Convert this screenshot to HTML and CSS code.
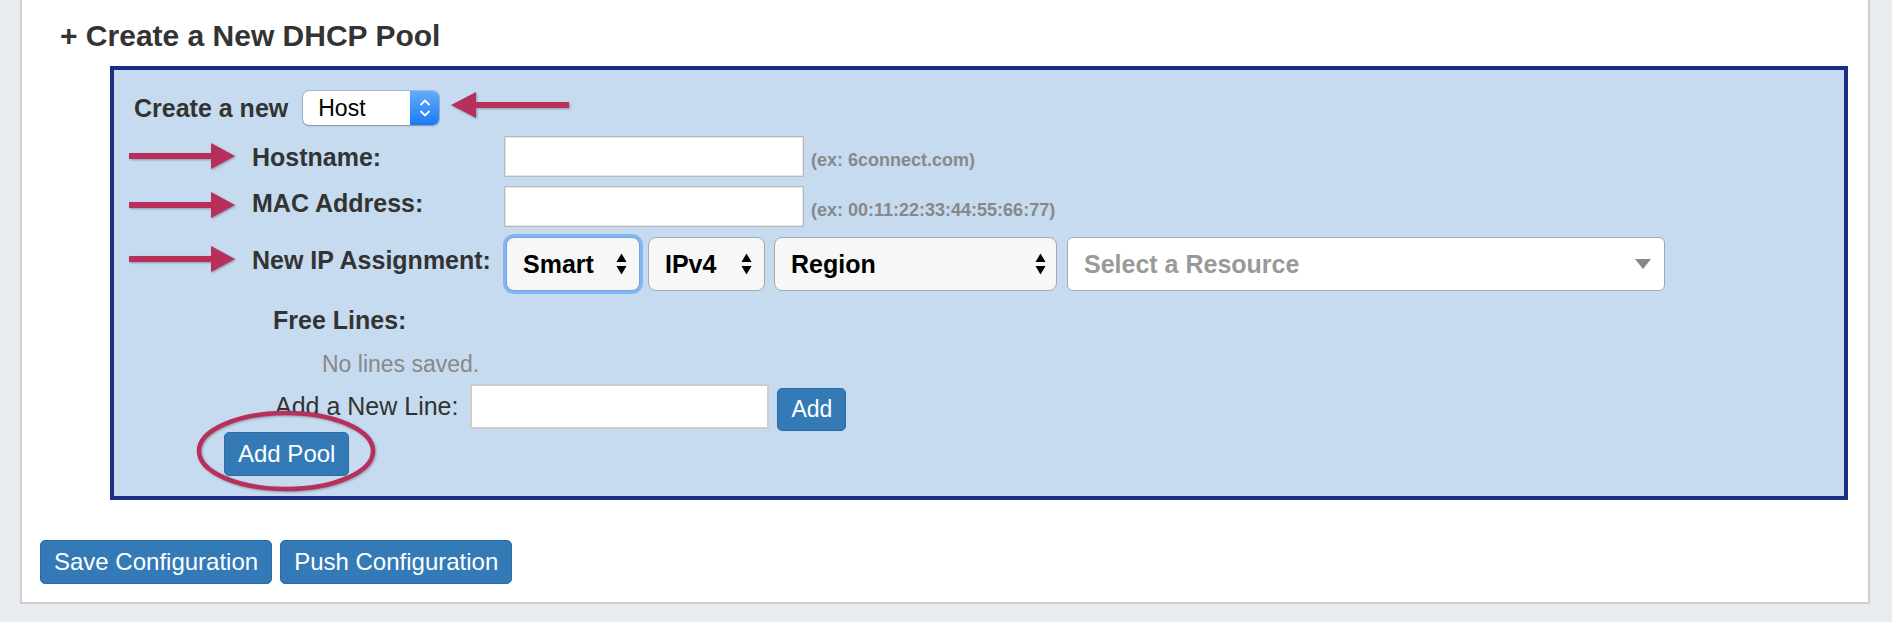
FILE: index.html
```html
<!DOCTYPE html>
<html lang="en">
<head>
<meta charset="utf-8">
<title>Create a New DHCP Pool</title>
<link rel="stylesheet" href="styles.css">
</head>
<body>
<div class="page">
  <div class="panel">
    <h3 class="title">+ Create a New DHCP Pool</h3>
    <div class="pool-box">
      <div class="create-row">
        <span class="create-label">Create a new</span>
        <div class="mac-select">
          <span class="mac-value">Host</span>
          <span class="mac-stepper">
            <svg width="12" height="20" viewBox="0 0 12 20"><polyline points="1.5,7 6,2.5 10.5,7" fill="none" stroke="#fff" stroke-width="1.8"/><polyline points="1.5,13 6,17.5 10.5,13" fill="none" stroke="#fff" stroke-width="1.8"/></svg>
          </span>
        </div>
      </div>

      <div class="field-row row-host">
        <label class="field-label">Hostname:</label>
        <input class="text-input" type="text">
        <span class="hint">(ex: 6connect.com)</span>
      </div>
      <div class="field-row row-mac">
        <label class="field-label">MAC Address:</label>
        <input class="text-input" type="text">
        <span class="hint">(ex: 00:11:22:33:44:55:66:77)</span>
      </div>
      <div class="field-row row-ip">
        <label class="field-label">New IP Assignment:</label>
        <div class="select-group">
          <div class="sel sel-smart focused"><span>Smart</span><svg class="updown" width="11" height="22" viewBox="0 0 11 22"><polygon points="0.5,9 5.5,0.5 10.5,9"/><polygon points="0.5,13 10.5,13 5.5,21.5"/></svg></div>
          <div class="sel sel-ipv4"><span>IPv4</span><svg class="updown" width="11" height="22" viewBox="0 0 11 22"><polygon points="0.5,9 5.5,0.5 10.5,9"/><polygon points="0.5,13 10.5,13 5.5,21.5"/></svg></div>
          <div class="sel sel-region"><span>Region</span><svg class="updown" width="11" height="22" viewBox="0 0 11 22"><polygon points="0.5,9 5.5,0.5 10.5,9"/><polygon points="0.5,13 10.5,13 5.5,21.5"/></svg></div>
          <div class="sel sel-resource"><span class="placeholder">Select a Resource</span><svg class="caret" width="16" height="10" viewBox="0 0 16 10"><polygon points="0,0 16,0 8,10"/></svg></div>
        </div>
      </div>

      <div class="free-lines">
        <div class="free-title">Free Lines:</div>
        <div class="no-lines">No lines saved.</div>
        <div class="add-line">
          <span class="add-line-label">Add a New Line:</span>
          <input class="text-input line-input" type="text">
          <button class="btn btn-add" type="button">Add</button>
        </div>
      </div>

      <button class="btn btn-pool" type="button">Add Pool</button>

      <svg class="annot arrow-left" width="118" height="26" viewBox="0 0 118 26"><rect x="22" y="10" width="96" height="6"/><polygon points="0,13 25,0 25,26"/></svg>
      <svg class="annot arrow-right ar-host" width="106" height="26" viewBox="0 0 106 26"><rect x="0" y="10" width="84" height="6"/><polygon points="82,0 106,13 82,26"/></svg>
      <svg class="annot arrow-right ar-mac" width="106" height="26" viewBox="0 0 106 26"><rect x="0" y="10" width="84" height="6"/><polygon points="82,0 106,13 82,26"/></svg>
      <svg class="annot arrow-right ar-ip" width="106" height="26" viewBox="0 0 106 26"><rect x="0" y="10" width="84" height="6"/><polygon points="82,0 106,13 82,26"/></svg>
      <svg class="annot ring" width="184" height="86" viewBox="0 0 184 86"><ellipse cx="92" cy="43" rx="87" ry="38"/></svg>
    </div>

    <div class="actions">
      <button class="btn" type="button">Save Configuration</button>
      <button class="btn" type="button">Push Configuration</button>
    </div>
  </div>
</div>
</body>
</html>
```
FILE: styles.css
```css
* { box-sizing: border-box; }

body {
  margin: 0;
  background: #e8ecf0;
  font-family: "Liberation Sans", Arial, Helvetica, sans-serif;
  color: #333;
}

.page {
  padding: 0 22px 18px 20px;
}

.panel {
  background: #fff;
  border: 2px solid #cfcfcf;
  border-top: 0;
  padding: 18px;
}

.title {
  margin: 0 0 0 20px;
  font-size: 30px;
  line-height: 36px;
  font-weight: bold;
  color: #333;
}

.pool-box {
  position: relative;
  margin: 12px 2px 0 70px;
  border: 4px solid #1b2e85;
  background: #c6dbf0;
  padding: 21px 20px 20px 20px;
}

/* row 1 */
.create-row {
  display: flex;
  align-items: center;
  height: 34px;
}
.create-label {
  font-size: 25px;
  font-weight: bold;
  line-height: 29px;
}
.mac-select {
  display: flex;
  width: 136px;
  height: 34px;
  margin-left: 15px;
  background: #fff;
  border-radius: 6px;
  box-shadow: 0 0 0 1px rgba(0, 0, 0, 0.16), 0 1px 2px rgba(0, 0, 0, 0.2);
}
.mac-value {
  flex: 1;
  padding-left: 15px;
  font-size: 23px;
  line-height: 34px;
  color: #000;
}
.mac-stepper {
  width: 29px;
  display: flex;
  align-items: center;
  justify-content: center;
  border-radius: 0 6px 6px 0;
  background: linear-gradient(#62acfd, #1b7bf4);
}

/* field rows */
.field-row {
  display: flex;
  align-items: flex-start;
  margin-left: 118px;
}
.row-host { margin-top: 11px; }
.row-mac { margin-top: 9px; }
.row-ip { margin-top: 10px; }

.field-label {
  width: 252px;
  flex: none;
  font-size: 25px;
  font-weight: bold;
  line-height: 29px;
  color: #333;
}
.row-host .field-label { padding-top: 7px; }
.row-mac .field-label { padding-top: 3px; }
.row-ip .field-label { padding-top: 9px; }

.text-input {
  width: 300px;
  height: 41px;
  margin: 0;
  border: 1px solid #b9b9b9;
  box-shadow: inset 0 0 0 1px #e4e4e4;
  background: #fff;
  font: 23px "Liberation Sans", Arial, sans-serif;
  padding: 0 8px;
  outline: none;
}

.hint {
  margin-left: 7px;
  padding-top: 14px;
  font-size: 18px;
  line-height: 21px;
  font-weight: bold;
  color: #888;
}

/* selects */
.select-group {
  display: flex;
  margin-left: 2px;
}
.sel {
  display: flex;
  align-items: center;
  height: 54px;
  padding: 0 12px 0 16px;
  border: 1.5px solid #a8a8a8;
  border-radius: 8px;
  background: #f7f7f7;
  font-size: 25px;
  font-weight: bold;
  line-height: 29px;
  color: #000;
}
.sel .updown {
  margin-left: auto;
  fill: #000;
}
.sel-smart { width: 134px; }
.sel-ipv4 { width: 117px; margin-left: 8px; }
.sel-region { width: 283px; margin-left: 9px; padding-right: 10px; }
.sel-resource {
  width: 598px;
  margin-left: 10px;
  background: #fff;
  border-radius: 6px;
  padding-right: 13px;
}
.sel-resource .caret {
  margin-left: auto;
  fill: #888;
}
.placeholder { color: #999; }
.focused {
  border: 1px solid #6fa6e4;
  box-shadow: 0 0 0 3px rgba(110, 168, 236, 0.75);
}

/* free lines */
.free-lines {
  margin-left: 139px;
}
.free-title {
  margin-top: 15px;
  font-size: 25px;
  font-weight: bold;
  line-height: 29px;
}
.no-lines {
  margin: 16px 0 0 49px;
  font-size: 23px;
  line-height: 27px;
  color: #888;
}
.add-line {
  display: flex;
  align-items: center;
  margin: 6px 0 0 2px;
  height: 45px;
}
.add-line-label {
  font-size: 25px;
  line-height: 29px;
  color: #333;
}
.line-input {
  width: 299px;
  height: 45px;
  margin-left: 12px;
  border: 2px solid #cdcdcd;
  box-shadow: none;
}

/* buttons */
.btn {
  font: 24px/26px "Liberation Sans", Arial, sans-serif;
  color: #fff;
  background: #337ab7;
  border: 1px solid #2e6da4;
  border-radius: 5px;
  padding: 8px 13px;
  margin: 0;
  cursor: pointer;
}
.btn-add {
  margin-left: 8px;
  margin-top: 6px;
  font-size: 23px;
  padding: 7px 13px 8px;
}
.btn-pool {
  display: block;
  margin: 3px 0 0 90px;
}

.actions {
  display: flex;
  gap: 8px;
  margin-top: 40px;
}

/* annotations */
.annot {
  position: absolute;
  overflow: visible;
  fill: #b7305c;
  filter: drop-shadow(1px 1px 1px rgba(0, 0, 0, 0.3));
}
.arrow-left { left: 337px; top: 22px; }
.ar-host { left: 15px; top: 73px; }
.ar-mac { left: 15px; top: 122px; }
.ar-ip { left: 15px; top: 176px; }
.ring {
  left: 80px;
  top: 338px;
  fill: none;
  stroke: #b7305c;
  stroke-width: 4.5;
}
```
